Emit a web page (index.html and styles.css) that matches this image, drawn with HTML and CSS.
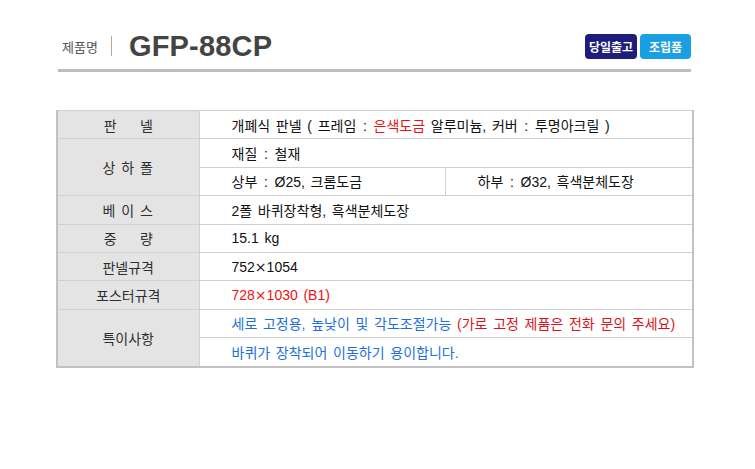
FILE: index.html
```html
<!DOCTYPE html>
<html lang="ko">
<head>
<meta charset="utf-8">
<link rel="stylesheet" href="styles.css">
</head>
<body>
<div class="page">
  <div class="header">
    <div class="title">
      <span class="label">제품명</span>
      <span class="sep"></span>
      <span class="model">GFP-88CP</span>
    </div>
    <div class="badges">
      <span class="badge navy">당일출고</span>
      <span class="badge sky">조립품</span>
    </div>
  </div>
  <div class="rule"></div>
  <table class="spec">
    <colgroup>
      <col class="c1"><col class="c2"><col class="c3">
    </colgroup>
    <tr>
      <th>판&nbsp;&nbsp;&nbsp;&nbsp;&nbsp;&nbsp;넬</th>
      <td colspan="2">개폐식 판넬 ( 프레임 <span class="colon">:</span> <span class="red">은색도금</span> 알루미늄, 커버 <span class="colon">:</span> 투명아크릴 )</td>
    </tr>
    <tr>
      <th rowspan="2" class="wide">상 하 폴</th>
      <td colspan="2">재질 <span class="colon">:</span> 철재</td>
    </tr>
    <tr>
      <td>상부 <span class="colon">:</span> Ø25, 크롬도금</td>
      <td>하부 <span class="colon">:</span> Ø32, 흑색분체도장</td>
    </tr>
    <tr>
      <th class="wide">베 이 스</th>
      <td colspan="2">2폴 바퀴장착형, 흑색분체도장</td>
    </tr>
    <tr>
      <th>중&nbsp;&nbsp;&nbsp;&nbsp;&nbsp;&nbsp;량</th>
      <td colspan="2">15.1 kg</td>
    </tr>
    <tr>
      <th>판넬규격</th>
      <td colspan="2">752<span class="mul">×</span>1054</td>
    </tr>
    <tr>
      <th>포스터규격</th>
      <td colspan="2"><span class="red">728<span class="mul">×</span>1030 (B1)</span></td>
    </tr>
    <tr>
      <th rowspan="2">특이사항</th>
      <td colspan="2"><span class="blue">세로 고정용, 높낮이 및 각도조절가능</span> <span class="dred">(가로 고정 제품은 전화 문의 주세요)</span></td>
    </tr>
    <tr>
      <td colspan="2"><span class="blue">바퀴가 장착되어 이동하기 용이합니다.</span></td>
    </tr>
  </table>
</div>
</body>
</html>
```
FILE: styles.css
```css
html, body {
  margin: 0;
  padding: 0;
  background: #fff;
}
body {
  font-family: "Liberation Sans", "Noto Sans CJK KR", sans-serif;
  color: #222;
}
.page {
  width: 636px;
  margin-left: 56px;
  padding-top: 28px;
}
.header {
  height: 36px;
  display: flex;
  align-items: center;
  justify-content: space-between;
  padding: 0 1px 0 6px;
}
.title {
  display: flex;
  align-items: center;
}
.title .label {
  font-family: "Noto Sans CJK KR", sans-serif;
  font-size: 13px;
  color: #555;
}
.title .sep {
  width: 1px;
  height: 20px;
  background: #aaa;
  margin: 0 17px 0 13px;
}
.title .model {
  font-family: "Liberation Sans", Arial, sans-serif;
  font-size: 29px;
  font-weight: bold;
  color: #444;
  letter-spacing: 0.2px;
}
.badges {
  display: flex;
  gap: 3px;
}
.badge {
  display: flex;
  align-items: center;
  justify-content: center;
  height: 25px;
  border-radius: 4px;
  color: #fff;
  font-family: "Noto Sans CJK KR", sans-serif;
  font-weight: bold;
  font-size: 12px;
}
.badge.navy {
  width: 52px;
  background: #1f1d7c;
}
.badge.sky {
  width: 51px;
  background: #1a9fe2;
}
.rule {
  height: 3px;
  background: #bcbcbc;
  margin: 5px 1px 0 2px;
}
.spec {
  margin-top: 38px;
  width: 636px;
  border-collapse: collapse;
  table-layout: fixed;
  border: 2px solid #c2c2c2;
  border-top: 1px solid #c8c8c8;
  font-size: 14px;
}
.spec col.c1 { width: 142px; }
.spec col.c2 { width: 246px; }
.spec col.c3 { width: 248px; }
.spec th, .spec td {
  border: 1px solid #d0d0d0;
  height: 27.4px;
  padding: 0;
  vertical-align: middle;
}
.spec th {
  background: #e4e4e4;
  font-weight: normal;
  color: #2e2e2e;
  text-align: center;
}
.spec th.wide {
  letter-spacing: 1px;
}
.spec td {
  text-align: left;
  padding-left: 32px;
  color: #111;
  word-spacing: 1.8px;
}
.colon {
  margin: 0 1px;
}
.mul {
  font-family: "DejaVu Sans", sans-serif;
}
.red { color: #f01010; }
.dred { color: #d8151c; }
.blue { color: #1d6fe0; }
```
